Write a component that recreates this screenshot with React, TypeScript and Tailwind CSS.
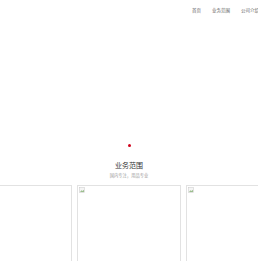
import React from 'react';

const navItems = ['首页', '业务范围', '公司介绍'];

function BrokenImage() {
  return (
    <svg width="6" height="6" viewBox="0 0 6 6" className="block">
      <rect x="0.5" y="0.5" width="5" height="5" fill="#f5f5f5" stroke="#c8c8c8" strokeWidth="0.5" />
      <path d="M1 5 L2.5 3.2 L3.5 4.1 L5 2.8 L5 5 Z" fill="#9cbf8e" />
    </svg>
  );
}

function Card({ img }: { img: boolean }) {
  return (
    <div className="w-[104px] h-[90px] shrink-0 border border-[#e2e2e2] bg-white p-[1px]">
      {img && <BrokenImage />}
    </div>
  );
}

export default function App() {
  return (
    <div
      className="w-[258px] h-[261px] overflow-hidden bg-white"
      style={{ fontFamily: '"Noto Sans CJK SC", "Noto Sans", sans-serif' }}
    >
      <header className="h-[20px] flex items-center justify-end">
        <nav className="flex items-center gap-[11px] text-[4.5px] leading-none text-[#666] mr-[-1px]">
          {navItems.map((n) => (
            <span key={n}>{n}</span>
          ))}
        </nav>
      </header>

      <section className="pt-[124px] flex flex-col items-center">
        <span className="w-[3px] h-[3px] rounded-full bg-[#d0021b]" />
        <h2 className="mt-[15px] text-[7px] leading-none text-[#333]">业务范围</h2>
        <p className="mt-[4px] text-[4.3px] leading-none text-[#999]">国内专注，用品专业</p>
      </section>

      <div className="mt-[8px] flex justify-center gap-[5px]">
        <Card img={false} />
        <Card img={true} />
        <Card img={true} />
      </div>
    </div>
  );
}
